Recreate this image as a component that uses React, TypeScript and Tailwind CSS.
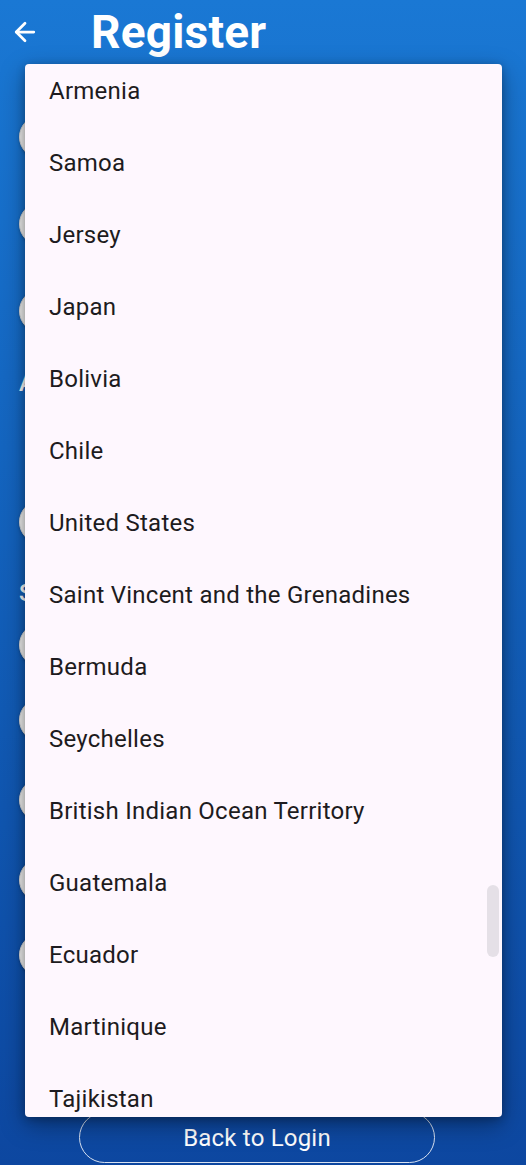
import { ArrowLeft } from "lucide-react";

const countries = [
  "Armenia",
  "Samoa",
  "Jersey",
  "Japan",
  "Bolivia",
  "Chile",
  "United States",
  "Saint Vincent and the Grenadines",
  "Bermuda",
  "Seychelles",
  "British Indian Ocean Territory",
  "Guatemala",
  "Ecuador",
  "Martinique",
  "Tajikistan",
];

function Field({ className = "" }: { className?: string }) {
  return (
    <div
      className={`h-[44px] w-[470px] rounded-full border border-[#d9d9d9] bg-[#f3f3f3] shadow-[0_1px_3px_rgba(0,0,0,0.25)] ${className}`}
    />
  );
}

function SectionLabel({ children, className = "" }: { children: string; className?: string }) {
  return (
    <div className={`h-[32px] text-[24px] leading-[32px] font-medium text-white ${className}`}>
      {children}
    </div>
  );
}

export default function App() {
  return (
    <div
      className="relative h-[1165px] w-[526px] overflow-hidden bg-gradient-to-b from-[#1a78d4] to-[#0d47a0]"
      style={{ fontFamily: "Roboto, 'Noto Sans', sans-serif" }}
    >
      {/* page under the menu */}
      <div className="flex h-[64px] items-center">
        <button type="button" className="ml-[7px] flex h-[36px] w-[36px] items-center justify-center text-white">
          <ArrowLeft size={30} strokeWidth={2.2} />
        </button>
        <h1 className="ml-[48px] text-[46px] leading-none font-bold tracking-[0.2px] text-white">Register</h1>
      </div>

      <div className="flex flex-col pl-[19px]">
        <Field className="mt-[51px]" />
        <Field className="mt-[43px]" />
        <Field className="mt-[43px]" />
        <SectionLabel className="mt-[34px]">Address</SectionLabel>
        <Field className="mt-[101px]" />
        <SectionLabel className="mt-[33px]">Security</SectionLabel>
        <Field className="mt-[14px]" />
        <Field className="mt-[31px]" />
        <Field className="mt-[36px]" />
        <Field className="mt-[36px]" />
        <Field className="mt-[31px]" />
      </div>

      <div className="absolute bottom-[2px] left-0 right-0 flex pl-[79px]">
        <button
          type="button"
          className="h-[51px] w-[356px] rounded-full border border-[#d8e2f2] text-[24px] tracking-[0.2px] text-white"
        >
          Back to Login
        </button>
      </div>

      {/* dropdown menu */}
      <div className="absolute left-[25px] top-[64px] h-[1053px] w-[477px] overflow-hidden rounded-[4px] bg-[#fef7fe] shadow-[0_8px_24px_rgba(0,0,0,0.35),0_2px_8px_rgba(0,0,0,0.25)]">
        <ul className="-mt-[9px]">
          {countries.map((name) => (
            <li
              key={name}
              className="flex h-[72px] items-center px-[24px] text-[24px] tracking-[0.25px] text-[#1d1b20]"
            >
              {name}
            </li>
          ))}
        </ul>
        <div className="absolute left-[462px] top-[821px] h-[72px] w-[12px] rounded-full bg-[#e5e0e7]" />
      </div>
    </div>
  );
}
